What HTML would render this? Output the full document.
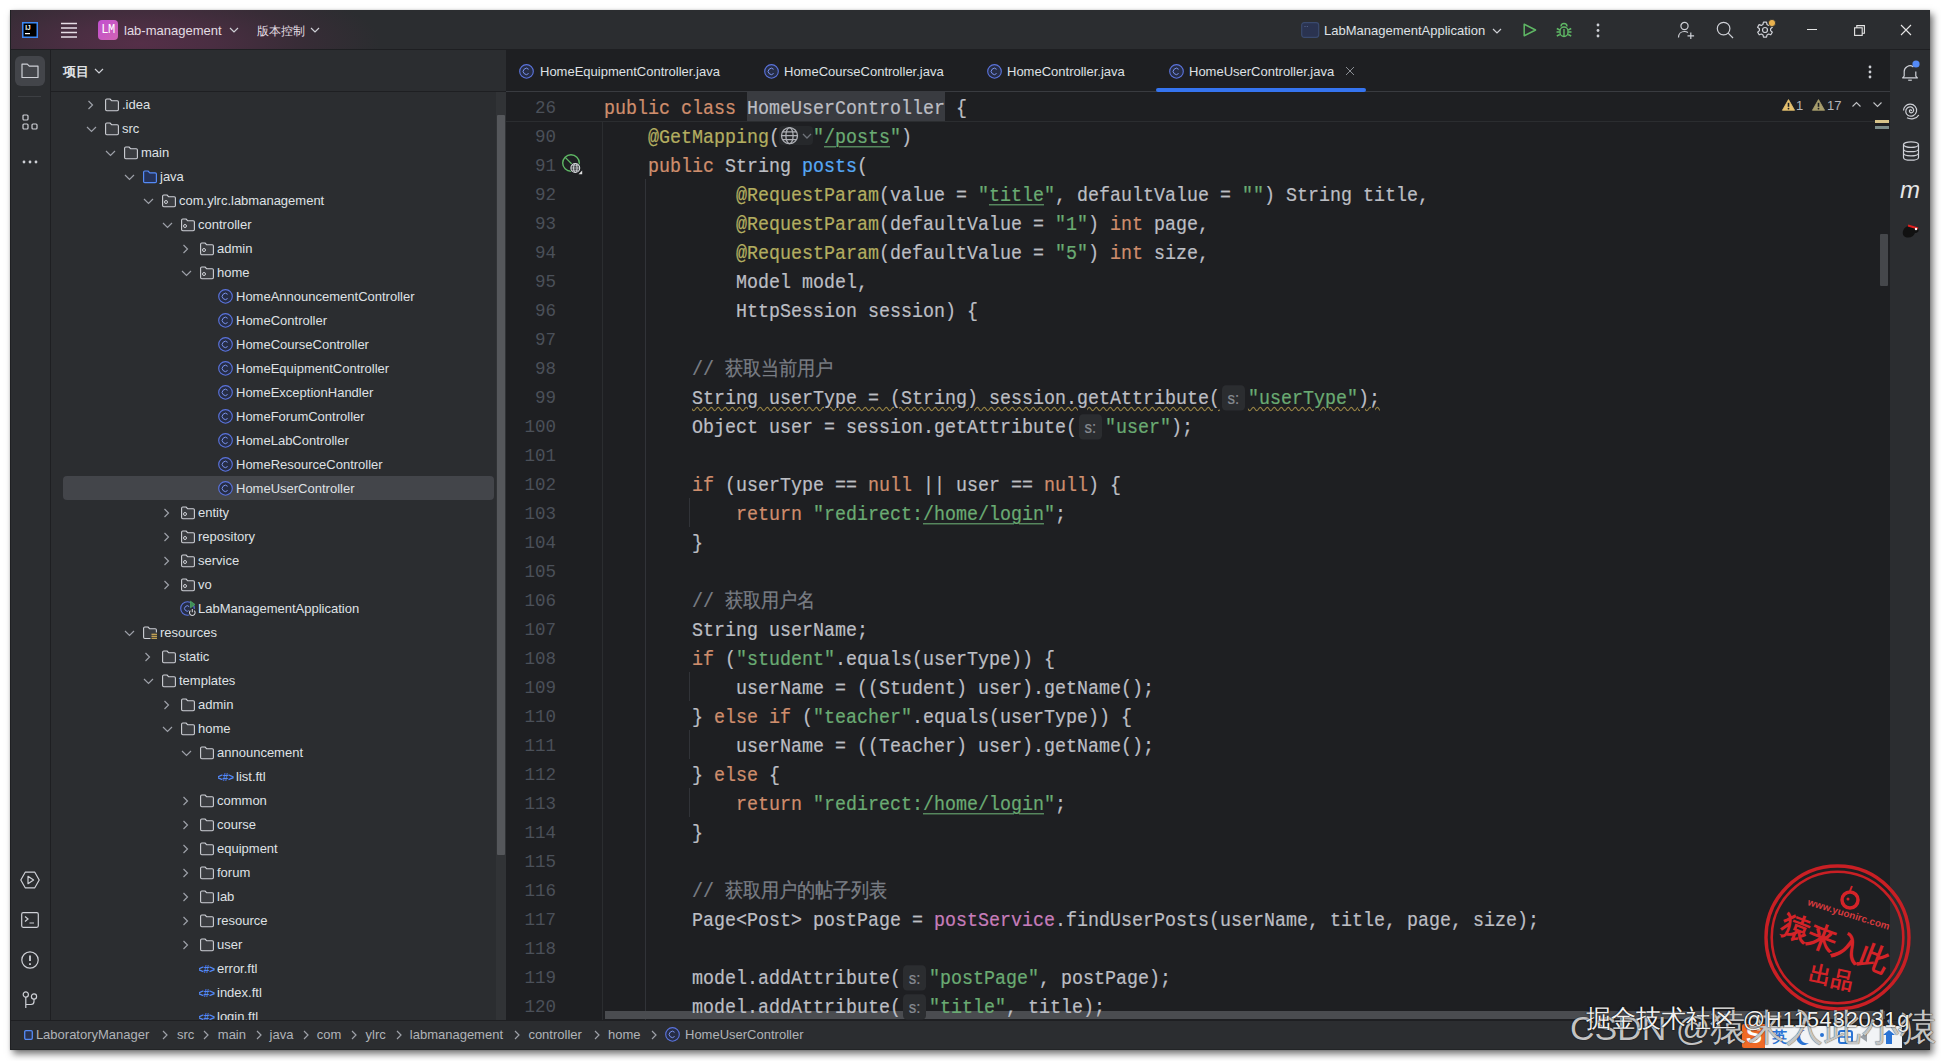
<!DOCTYPE html>
<html><head><meta charset="utf-8">
<style>
*{margin:0;padding:0;box-sizing:border-box}
html,body{width:1941px;height:1061px;overflow:hidden;background:#fff;font-family:"Liberation Sans",sans-serif}
.a{position:absolute}
svg{overflow:visible}
#win{position:absolute;left:10px;top:10px;width:1920px;height:1040px;background:#2b2d30;overflow:hidden;box-shadow:3px 4px 7px rgba(0,0,0,.55),0 0 2px rgba(0,0,0,.15);border-bottom:1px solid #222426}
#title{position:absolute;left:0;top:0;width:1920px;height:40px;background:radial-gradient(ellipse 240px 70px at 130px 34px,#552f48 0%,#4a2e42 30%,#372c36 68%,#2b2d30 100%);border-bottom:1px solid #1e1f22}
#ltool{position:absolute;left:0;top:40px;width:41px;height:970px;background:#2b2d30;border-right:1px solid #1e1f22}
#proj{position:absolute;left:41px;top:40px;width:455px;height:970px;background:#2b2d30;overflow:hidden}
#editor{position:absolute;left:496px;top:40px;width:1384px;height:970px;background:#1e1f22;overflow:hidden}
#rtool{position:absolute;left:1880px;top:40px;width:40px;height:970px;background:#2b2d30}
#status{position:absolute;left:0;top:1010px;width:1920px;height:30px;background:#2b2d30;border-top:1px solid #1e1f22}
.tt,.t{position:absolute;white-space:pre;font-size:13px;color:#dfe1e5;line-height:24px;top:0}
.row{position:absolute;left:0;width:455px;height:24px}
.ar{position:absolute;top:0;fill:none;stroke:#9da0a8;stroke-width:1.2}
.ic{position:absolute;top:0}
.code{position:absolute;left:98px;white-space:pre;-webkit-text-stroke:.2px currentColor;transform:scaleY(1.1);transform-origin:0 19.5px;font-family:"Liberation Mono",monospace;font-size:18.33px;line-height:29px;height:29px;color:#bcbec4}
.ln{position:absolute;left:0;width:50px;text-align:right;font-family:"Liberation Mono",monospace;font-size:17.5px;line-height:29px;height:29px;color:#4b5059}
.k{color:#cf8e6d}.s{color:#6aab73}.an{color:#b3ae60}.m{color:#56a8f5}.c{color:#7a7e85}.f{color:#c77dbb}
.hl{background:#393b40;display:inline-block;height:29px;vertical-align:top}
.u{text-decoration:underline;text-underline-offset:3px;text-decoration-thickness:1px}
.hint{display:inline-block;position:relative;top:2px;width:23px;height:23px;margin:0 3px 0 2px;vertical-align:top;background:#2b2d30;border-radius:4px;color:#868a91;font-family:"Liberation Sans",sans-serif;font-size:15px;line-height:23px;text-align:center}
.globe{display:inline-block;width:33px;height:1px}
.wavy{text-decoration:underline wavy #9a8544;text-decoration-thickness:1px;text-underline-offset:2px}
.tab{position:absolute;top:1px;height:41px;line-height:41px;font-size:13px;color:#dfe1e5;white-space:pre}
.ti{position:absolute;fill:none;stroke:#ced0d6;stroke-width:1.2}
</style></head><body>

<svg width="0" height="0" style="position:absolute">
<defs>
<symbol id="i-folder" viewBox="0 0 16 24"><path d="M1.6 7.2a1.2 1.2 0 0 1 1.2-1.2h3.2l1.8 1.8h5.4a1.2 1.2 0 0 1 1.2 1.2v7.5a1.2 1.2 0 0 1-1.2 1.2H2.8a1.2 1.2 0 0 1-1.2-1.2z" fill="#3a3c40" stroke="#ced0d6" stroke-width="1.1" stroke-linejoin="round"/></symbol>
<symbol id="i-pkg" viewBox="0 0 16 24"><path d="M1.6 7.2a1.2 1.2 0 0 1 1.2-1.2h3.2l1.8 1.8h5.4a1.2 1.2 0 0 1 1.2 1.2v7.5a1.2 1.2 0 0 1-1.2 1.2H2.8a1.2 1.2 0 0 1-1.2-1.2z" fill="#3a3c40" stroke="#ced0d6" stroke-width="1.1" stroke-linejoin="round"/><circle cx="5" cy="13" r="1.5" fill="none" stroke="#ced0d6" stroke-width="1"/></symbol>
<symbol id="i-jfolder" viewBox="0 0 16 24"><path d="M1.6 7.2a1.2 1.2 0 0 1 1.2-1.2h3.2l1.8 1.8h5.4a1.2 1.2 0 0 1 1.2 1.2v7.5a1.2 1.2 0 0 1-1.2 1.2H2.8a1.2 1.2 0 0 1-1.2-1.2z" fill="#25335a" stroke="#548af7" stroke-width="1.2" stroke-linejoin="round"/></symbol>
<symbol id="i-res" viewBox="0 0 16 24"><path d="M8.5 17.5H2.8a1.2 1.2 0 0 1-1.2-1.2V7.2a1.2 1.2 0 0 1 1.2-1.2h3.2l1.8 1.8h5.4a1.2 1.2 0 0 1 1.2 1.2v2.5" fill="#3a3c40" stroke="#ced0d6" stroke-width="1.1" stroke-linejoin="round"/><path d="M9.5 13.3h5.5M9.5 15.3h5.5M9.5 17.3h5.5" stroke="#f2c55c" stroke-width="1.1"/></symbol>
<symbol id="i-class" viewBox="0 0 16 24"><circle cx="7.5" cy="11.4" r="6.8" fill="#262d45" stroke="#5b74de" stroke-width="1.1"/><path d="M9.6 9.3A3.1 3.1 0 1 0 9.6 13.5" fill="none" stroke="#7b93ee" stroke-width="1"/></symbol>
<symbol id="i-app" viewBox="0 0 16 24"><circle cx="7.5" cy="11.5" r="6.8" fill="#262d45" stroke="#5b74de" stroke-width="1.1"/><path d="M9.2 9.6A2.7 2.7 0 1 0 9.2 13.4" fill="none" stroke="#7b93ee" stroke-width="1"/><path d="M10.5 4.2l4.5 3.3-4.5 3.3z" fill="#3d8f58" stroke="#4fa55f" stroke-width=".8"/><circle cx="12.3" cy="15.6" r="4" fill="#2b2d30"/><path d="M10.4 13.6a2.8 2.8 0 1 0 3.8 0M12.3 12v3.2" fill="none" stroke="#ced0d6" stroke-width="1.1"/></symbol>
<symbol id="i-ftl" viewBox="0 0 16 24"><text x="7.5" y="15.6" text-anchor="middle" font-family="Liberation Sans" font-size="10" font-weight="bold" fill="#548af7">&lt;#&gt;</text></symbol>
</defs></svg>

<div id="win">
  <div id="title">
<svg class="a" style="left:12px;top:12px" width="16" height="16"><rect x=".75" y=".75" width="14.5" height="14.5" fill="#000" stroke="#3d8af7" stroke-width="1.5"/><text x="3.2" y="8.2" font-family="Liberation Sans" font-weight="bold" font-size="6.5" fill="#fff">IJ</text><rect x="3" y="11" width="5" height="1.2" fill="#fff"/></svg>
<svg class="a" style="left:51px;top:12px" width="16" height="16"><path d="M0 1.5h16M0 6h16M0 10.5h16M0 15h16" stroke="#e6dde6" stroke-width="1.3"/></svg>
<div class="a" style="left:88px;top:10px;width:20px;height:20px;border-radius:4px;background:linear-gradient(135deg,#c24fd0,#d063b4)"></div>
<span class="a" style="left:89px;top:10px;width:18px;text-align:center;font-family:'Liberation Mono',monospace;font-size:12px;line-height:20px;color:#fff;letter-spacing:-.5px">LM</span>
<span class="a" style="left:114px;top:11px;font-size:13px;line-height:20px;color:#e3dde3">lab-management</span>
<svg class="a ti" style="left:219px;top:17px" width="10" height="6"><path d="M1 1l4 4 4-4"/></svg>
<span class="a" style="left:247px;top:11px;font-size:12px;line-height:20px;color:#e3dde3">版本控制</span>
<svg class="a ti" style="left:300px;top:17px" width="10" height="6"><path d="M1 1l4 4 4-4"/></svg>
<svg class="a" style="left:1291px;top:12px" width="19" height="16"><rect x=".7" y=".7" width="17" height="14.6" rx="2.5" fill="#2a3350" stroke="#3a4a6e" stroke-width="1.2"/><path d="M3.5 4.5h1M5.8 4.5h1" stroke="#5a6a90" stroke-width="1"/></svg>
<span class="a" style="left:1314px;top:11px;font-size:13px;line-height:20px;color:#dfe1e5">LabManagementApplication</span>
<svg class="a ti" style="left:1482px;top:18px" width="10" height="6"><path d="M1 1l4 4 4-4"/></svg>
<svg class="a" style="left:1513px;top:13px" width="14" height="14"><path d="M1.2 1.2v11.6L12.6 7z" fill="none" stroke="#5fb865" stroke-width="1.5" stroke-linejoin="round"/></svg>
<svg class="a" style="left:1546px;top:12px" width="16" height="16" fill="none" stroke="#5fb865" stroke-width="1.4"><path d="M5 4.5a3 3 0 0 1 6 0"/><rect x="4" y="5" width="8" height="9.5" rx="4"/><path d="M8 7v7M0.8 6.5l3 1.5M15.2 6.5l-3 1.5M0.5 10h3.3M15.5 10h-3.3M0.8 14l3-1.5M15.2 14l-3-1.5"/></svg>
<svg class="a" style="left:1586px;top:13px" width="4" height="14"><circle cx="2" cy="2" r="1.4" fill="#ced0d6"/><circle cx="2" cy="7.5" r="1.4" fill="#ced0d6"/><circle cx="2" cy="13" r="1.4" fill="#ced0d6"/></svg>
<svg class="a ti" style="left:1667px;top:11px" width="18" height="18"><circle cx="7.5" cy="5" r="3.6"/><path d="M1.5 16.5c0-3.5 2.5-6 6-6 1.5 0 2.6.4 3.4 1"/><path d="M13.8 11.5v6.5M10.5 14.8h6.6"/></svg>
<svg class="a ti" style="left:1706px;top:11px" width="18" height="18"><circle cx="7.6" cy="7.6" r="6.3"/><path d="M12.2 12.2l4.8 4.8"/></svg>
<svg class="a ti" style="left:1746px;top:11px" width="18" height="18"><path d="M7.5 1.2h3l.5 2.3 1.6.9 2.2-.8 1.5 2.6-1.7 1.6v1.8l1.7 1.6-1.5 2.6-2.2-.8-1.6.9-.5 2.3h-3l-.5-2.3-1.6-.9-2.2.8-1.5-2.6 1.7-1.6v-1.8L1.6 6.2l1.5-2.6 2.2.8 1.6-.9z" stroke-linejoin="round"/><circle cx="9" cy="9" r="2.5"/></svg>
<svg class="a" style="left:1758px;top:9px" width="8" height="8"><circle cx="4" cy="4" r="3.6" fill="#e9b14e" stroke="#2b2d30" stroke-width=".8"/></svg>
<div class="a" style="left:1797px;top:19px;width:10px;height:1.2px;background:#e6e6e6"></div>
<svg class="a" style="left:1844px;top:15px" width="11" height="11" fill="none" stroke="#e6e6e6" stroke-width="1.1"><rect x=".6" y="2.8" width="7.6" height="7.6"/><path d="M2.8 2.8V.6h7.6v7.6H8.2"/></svg>
<svg class="a" style="left:1891px;top:15px" width="10" height="10"><path d="M0 0l10 10M10 0L0 10" stroke="#e6e6e6" stroke-width="1.1"/></svg>

  </div>
  <div id="ltool">
<div class="a" style="left:5px;top:6px;width:30px;height:30px;border-radius:6px;background:#43454a"></div>
<svg class="a ti" style="left:11px;top:13px" width="18" height="16"><path d="M1 1.2h5.3l2 2H17v11.3H1z" stroke-linejoin="round"/></svg>
<div class="a" style="left:8px;top:46px;width:23px;height:1px;background:#3d3f43"></div>
<svg class="a ti" style="left:12px;top:64px" width="16" height="16"><rect x="1" y="1" width="5" height="5" rx="1"/><rect x="1" y="10" width="5" height="5" rx="1"/><rect x="10" y="10" width="5" height="5" rx="1"/></svg>
<svg class="a" style="left:12px;top:110px" width="16" height="4"><circle cx="2" cy="2" r="1.4" fill="#ced0d6"/><circle cx="8" cy="2" r="1.4" fill="#ced0d6"/><circle cx="14" cy="2" r="1.4" fill="#ced0d6"/></svg>
<svg class="a ti" style="left:10px;top:821px" width="20" height="18"><path d="M5.2 1.2h9.6l4.4 7.8-4.4 7.8H5.2L.8 9z" stroke-linejoin="round"/><path d="M8 5.3v7.4l5.6-3.7z" stroke-linejoin="round"/></svg>
<svg class="a ti" style="left:11px;top:862px" width="18" height="16"><rect x=".7" y=".7" width="16.6" height="14.6" rx="1.5"/><path d="M4 4.5l3 2.5-3 2.5M8.5 11h4.5"/></svg>
<svg class="a ti" style="left:11px;top:901px" width="18" height="18"><circle cx="9" cy="9" r="8.2"/><path d="M9 4.5v5.5M9 12.3v1.6" stroke-width="1.8"/></svg>
<svg class="a ti" style="left:12px;top:941px" width="16" height="18"><circle cx="3.8" cy="3.5" r="2.6"/><circle cx="12" cy="5.5" r="2.6"/><path d="M3.8 6.1v11M3.8 13.5h5.2c2 0 3-1 3-3V8.1"/></svg>

  </div>
  <div id="proj">
    <span class="a" style="left:12px;top:12px;font-size:13px;font-weight:bold;color:#dfe1e5;line-height:20px">项目</span>
    <svg class="a ti" style="left:43px;top:18px" width="10" height="6"><path d="M1 1l4 4 4-4"/></svg>
    <div class="a" style="left:0;top:41px;width:455px;height:1px;background:#1e1f22"></div>
    <div class="a" style="left:445px;top:42px;width:10px;height:930px;background:#313336"></div>
    <div class="a" style="left:446px;top:65px;width:8px;height:740px;background:#55575b;border-radius:1px"></div>
    <div class="a" style="left:12px;top:426px;width:431px;height:24px;background:#43454a;border-radius:4px"></div>
<div class="row" style="top:43px"><svg class="ar" style="left:35px" width="10" height="24"><path d="M2.5 8l4 4-4 4"/></svg><svg class="ic" style="left:53px" width="16" height="24"><use href="#i-folder"/></svg><span class="tt" style="left:71px">.idea</span></div>
<div class="row" style="top:67px"><svg class="ar" style="left:34px" width="12" height="24"><path d="M2 10l4.5 4.5 4.5-4.5"/></svg><svg class="ic" style="left:53px" width="16" height="24"><use href="#i-folder"/></svg><span class="tt" style="left:71px">src</span></div>
<div class="row" style="top:91px"><svg class="ar" style="left:53px" width="12" height="24"><path d="M2 10l4.5 4.5 4.5-4.5"/></svg><svg class="ic" style="left:72px" width="16" height="24"><use href="#i-folder"/></svg><span class="tt" style="left:90px">main</span></div>
<div class="row" style="top:115px"><svg class="ar" style="left:72px" width="12" height="24"><path d="M2 10l4.5 4.5 4.5-4.5"/></svg><svg class="ic" style="left:91px" width="16" height="24"><use href="#i-jfolder"/></svg><span class="tt" style="left:109px">java</span></div>
<div class="row" style="top:139px"><svg class="ar" style="left:91px" width="12" height="24"><path d="M2 10l4.5 4.5 4.5-4.5"/></svg><svg class="ic" style="left:110px" width="16" height="24"><use href="#i-pkg"/></svg><span class="tt" style="left:128px">com.ylrc.labmanagement</span></div>
<div class="row" style="top:163px"><svg class="ar" style="left:110px" width="12" height="24"><path d="M2 10l4.5 4.5 4.5-4.5"/></svg><svg class="ic" style="left:129px" width="16" height="24"><use href="#i-pkg"/></svg><span class="tt" style="left:147px">controller</span></div>
<div class="row" style="top:187px"><svg class="ar" style="left:130px" width="10" height="24"><path d="M2.5 8l4 4-4 4"/></svg><svg class="ic" style="left:148px" width="16" height="24"><use href="#i-pkg"/></svg><span class="tt" style="left:166px">admin</span></div>
<div class="row" style="top:211px"><svg class="ar" style="left:129px" width="12" height="24"><path d="M2 10l4.5 4.5 4.5-4.5"/></svg><svg class="ic" style="left:148px" width="16" height="24"><use href="#i-pkg"/></svg><span class="tt" style="left:166px">home</span></div>
<div class="row" style="top:235px"><svg class="ic" style="left:167px" width="16" height="24"><use href="#i-class"/></svg><span class="tt" style="left:185px">HomeAnnouncementController</span></div>
<div class="row" style="top:259px"><svg class="ic" style="left:167px" width="16" height="24"><use href="#i-class"/></svg><span class="tt" style="left:185px">HomeController</span></div>
<div class="row" style="top:283px"><svg class="ic" style="left:167px" width="16" height="24"><use href="#i-class"/></svg><span class="tt" style="left:185px">HomeCourseController</span></div>
<div class="row" style="top:307px"><svg class="ic" style="left:167px" width="16" height="24"><use href="#i-class"/></svg><span class="tt" style="left:185px">HomeEquipmentController</span></div>
<div class="row" style="top:331px"><svg class="ic" style="left:167px" width="16" height="24"><use href="#i-class"/></svg><span class="tt" style="left:185px">HomeExceptionHandler</span></div>
<div class="row" style="top:355px"><svg class="ic" style="left:167px" width="16" height="24"><use href="#i-class"/></svg><span class="tt" style="left:185px">HomeForumController</span></div>
<div class="row" style="top:379px"><svg class="ic" style="left:167px" width="16" height="24"><use href="#i-class"/></svg><span class="tt" style="left:185px">HomeLabController</span></div>
<div class="row" style="top:403px"><svg class="ic" style="left:167px" width="16" height="24"><use href="#i-class"/></svg><span class="tt" style="left:185px">HomeResourceController</span></div>
<div class="row" style="top:427px"><svg class="ic" style="left:167px" width="16" height="24"><use href="#i-class"/></svg><span class="tt" style="left:185px">HomeUserController</span></div>
<div class="row" style="top:451px"><svg class="ar" style="left:111px" width="10" height="24"><path d="M2.5 8l4 4-4 4"/></svg><svg class="ic" style="left:129px" width="16" height="24"><use href="#i-pkg"/></svg><span class="tt" style="left:147px">entity</span></div>
<div class="row" style="top:475px"><svg class="ar" style="left:111px" width="10" height="24"><path d="M2.5 8l4 4-4 4"/></svg><svg class="ic" style="left:129px" width="16" height="24"><use href="#i-pkg"/></svg><span class="tt" style="left:147px">repository</span></div>
<div class="row" style="top:499px"><svg class="ar" style="left:111px" width="10" height="24"><path d="M2.5 8l4 4-4 4"/></svg><svg class="ic" style="left:129px" width="16" height="24"><use href="#i-pkg"/></svg><span class="tt" style="left:147px">service</span></div>
<div class="row" style="top:523px"><svg class="ar" style="left:111px" width="10" height="24"><path d="M2.5 8l4 4-4 4"/></svg><svg class="ic" style="left:129px" width="16" height="24"><use href="#i-pkg"/></svg><span class="tt" style="left:147px">vo</span></div>
<div class="row" style="top:547px"><svg class="ic" style="left:129px" width="16" height="24"><use href="#i-app"/></svg><span class="tt" style="left:147px">LabManagementApplication</span></div>
<div class="row" style="top:571px"><svg class="ar" style="left:72px" width="12" height="24"><path d="M2 10l4.5 4.5 4.5-4.5"/></svg><svg class="ic" style="left:91px" width="16" height="24"><use href="#i-res"/></svg><span class="tt" style="left:109px">resources</span></div>
<div class="row" style="top:595px"><svg class="ar" style="left:92px" width="10" height="24"><path d="M2.5 8l4 4-4 4"/></svg><svg class="ic" style="left:110px" width="16" height="24"><use href="#i-folder"/></svg><span class="tt" style="left:128px">static</span></div>
<div class="row" style="top:619px"><svg class="ar" style="left:91px" width="12" height="24"><path d="M2 10l4.5 4.5 4.5-4.5"/></svg><svg class="ic" style="left:110px" width="16" height="24"><use href="#i-folder"/></svg><span class="tt" style="left:128px">templates</span></div>
<div class="row" style="top:643px"><svg class="ar" style="left:111px" width="10" height="24"><path d="M2.5 8l4 4-4 4"/></svg><svg class="ic" style="left:129px" width="16" height="24"><use href="#i-folder"/></svg><span class="tt" style="left:147px">admin</span></div>
<div class="row" style="top:667px"><svg class="ar" style="left:110px" width="12" height="24"><path d="M2 10l4.5 4.5 4.5-4.5"/></svg><svg class="ic" style="left:129px" width="16" height="24"><use href="#i-folder"/></svg><span class="tt" style="left:147px">home</span></div>
<div class="row" style="top:691px"><svg class="ar" style="left:129px" width="12" height="24"><path d="M2 10l4.5 4.5 4.5-4.5"/></svg><svg class="ic" style="left:148px" width="16" height="24"><use href="#i-folder"/></svg><span class="tt" style="left:166px">announcement</span></div>
<div class="row" style="top:715px"><svg class="ic" style="left:167px" width="16" height="24"><use href="#i-ftl"/></svg><span class="tt" style="left:185px">list.ftl</span></div>
<div class="row" style="top:739px"><svg class="ar" style="left:130px" width="10" height="24"><path d="M2.5 8l4 4-4 4"/></svg><svg class="ic" style="left:148px" width="16" height="24"><use href="#i-folder"/></svg><span class="tt" style="left:166px">common</span></div>
<div class="row" style="top:763px"><svg class="ar" style="left:130px" width="10" height="24"><path d="M2.5 8l4 4-4 4"/></svg><svg class="ic" style="left:148px" width="16" height="24"><use href="#i-folder"/></svg><span class="tt" style="left:166px">course</span></div>
<div class="row" style="top:787px"><svg class="ar" style="left:130px" width="10" height="24"><path d="M2.5 8l4 4-4 4"/></svg><svg class="ic" style="left:148px" width="16" height="24"><use href="#i-folder"/></svg><span class="tt" style="left:166px">equipment</span></div>
<div class="row" style="top:811px"><svg class="ar" style="left:130px" width="10" height="24"><path d="M2.5 8l4 4-4 4"/></svg><svg class="ic" style="left:148px" width="16" height="24"><use href="#i-folder"/></svg><span class="tt" style="left:166px">forum</span></div>
<div class="row" style="top:835px"><svg class="ar" style="left:130px" width="10" height="24"><path d="M2.5 8l4 4-4 4"/></svg><svg class="ic" style="left:148px" width="16" height="24"><use href="#i-folder"/></svg><span class="tt" style="left:166px">lab</span></div>
<div class="row" style="top:859px"><svg class="ar" style="left:130px" width="10" height="24"><path d="M2.5 8l4 4-4 4"/></svg><svg class="ic" style="left:148px" width="16" height="24"><use href="#i-folder"/></svg><span class="tt" style="left:166px">resource</span></div>
<div class="row" style="top:883px"><svg class="ar" style="left:130px" width="10" height="24"><path d="M2.5 8l4 4-4 4"/></svg><svg class="ic" style="left:148px" width="16" height="24"><use href="#i-folder"/></svg><span class="tt" style="left:166px">user</span></div>
<div class="row" style="top:907px"><svg class="ic" style="left:148px" width="16" height="24"><use href="#i-ftl"/></svg><span class="tt" style="left:166px">error.ftl</span></div>
<div class="row" style="top:931px"><svg class="ic" style="left:148px" width="16" height="24"><use href="#i-ftl"/></svg><span class="tt" style="left:166px">index.ftl</span></div>
<div class="row" style="top:955px"><svg class="ic" style="left:148px" width="16" height="24"><use href="#i-ftl"/></svg><span class="tt" style="left:166px">login.ftl</span></div>
  </div>
  <div id="editor">
<svg class="ic" style="left:13px;top:10px" width="16" height="24"><use href="#i-class"/></svg>
<span class="tab" style="left:34px">HomeEquipmentController.java</span>
<svg class="ic" style="left:258px;top:10px" width="16" height="24"><use href="#i-class"/></svg>
<span class="tab" style="left:278px">HomeCourseController.java</span>
<svg class="ic" style="left:481px;top:10px" width="16" height="24"><use href="#i-class"/></svg>
<span class="tab" style="left:501px">HomeController.java</span>
<svg class="ic" style="left:663px;top:10px" width="16" height="24"><use href="#i-class"/></svg>
<span class="tab" style="left:683px">HomeUserController.java</span>
<svg class="a" style="left:840px;top:17px" width="8" height="8"><path d="M0 0l8 8M8 0L0 8" stroke="#8a8d93" stroke-width="1"/></svg>
<div class="a" style="left:650px;top:38px;width:210px;height:4px;border-radius:2px;background:#3574f0;z-index:2"></div>
<svg class="a" style="left:1362px;top:15px" width="4" height="14"><circle cx="2" cy="2" r="1.4" fill="#ced0d6"/><circle cx="2" cy="7" r="1.4" fill="#ced0d6"/><circle cx="2" cy="12" r="1.4" fill="#ced0d6"/></svg>

    <div class="a" style="left:0;top:41px;width:1384px;height:1px;background:#393b40"></div>
    <div class="a" style="left:0;top:71px;width:1384px;height:1px;background:#2b2d30"></div>
    <div class="a" style="left:96px;top:72px;width:1px;height:900px;background:#2b2d30"></div>
<div class="a" style="left:241px;top:42px;width:198px;height:29px;background:#393b40"></div>
<div class="a" style="left:139px;top:129px;width:1px;height:850px;background:#313338"></div>
<div class="a" style="left:183px;top:448px;width:1px;height:29px;background:#313338"></div>
<div class="a" style="left:183px;top:622px;width:1px;height:29px;background:#313338"></div>
<div class="a" style="left:183px;top:680px;width:1px;height:29px;background:#313338"></div>
<div class="a" style="left:183px;top:738px;width:1px;height:29px;background:#313338"></div>
<div class="a" style="left:99px;top:961px;width:1280px;height:8px;background:#4a4c50"></div>
<div class="ln" style="top:44px">26</div><div class="code" style="top:45px"><span class="k">public</span> <span class="k">class</span> HomeUserController {</div>
<div class="ln" style="top:73px">90</div><div class="code" style="top:74px">    <span class="an">@GetMapping</span>(<span class="globe"></span><span class="s">"<span class="u">/posts</span>"</span>)</div>
<div class="ln" style="top:102px">91</div><div class="code" style="top:103px">    <span class="k">public</span> String <span class="m">posts</span>(</div>
<div class="ln" style="top:131px">92</div><div class="code" style="top:132px">            <span class="an">@RequestParam</span>(value = <span class="s">"<span class="u">title</span>"</span>, defaultValue = <span class="s">""</span>) String title,</div>
<div class="ln" style="top:160px">93</div><div class="code" style="top:161px">            <span class="an">@RequestParam</span>(defaultValue = <span class="s">"1"</span>) <span class="k">int</span> page,</div>
<div class="ln" style="top:189px">94</div><div class="code" style="top:190px">            <span class="an">@RequestParam</span>(defaultValue = <span class="s">"5"</span>) <span class="k">int</span> size,</div>
<div class="ln" style="top:218px">95</div><div class="code" style="top:219px">            Model model,</div>
<div class="ln" style="top:247px">96</div><div class="code" style="top:248px">            HttpSession session) {</div>
<div class="ln" style="top:276px">97</div><div class="code" style="top:277px"></div>
<div class="ln" style="top:305px">98</div><div class="code" style="top:306px">        <span class="c">// 获取当前用户</span></div>
<div class="ln" style="top:334px">99</div><div class="code" style="top:335px">        <span class="wavy">String userType = (String) session.getAttribute(</span><span class="hint">s:</span><span class="wavy"><span class="s">"userType"</span>);</span></div>
<div class="ln" style="top:363px">100</div><div class="code" style="top:364px">        Object user = session.getAttribute(<span class="hint">s:</span><span class="s">"user"</span>);</div>
<div class="ln" style="top:392px">101</div><div class="code" style="top:393px"></div>
<div class="ln" style="top:421px">102</div><div class="code" style="top:422px">        <span class="k">if</span> (userType == <span class="k">null</span> || user == <span class="k">null</span>) {</div>
<div class="ln" style="top:450px">103</div><div class="code" style="top:451px">            <span class="k">return</span> <span class="s">"redirect:<span class="u">/home/login</span>"</span>;</div>
<div class="ln" style="top:479px">104</div><div class="code" style="top:480px">        }</div>
<div class="ln" style="top:508px">105</div><div class="code" style="top:509px"></div>
<div class="ln" style="top:537px">106</div><div class="code" style="top:538px">        <span class="c">// 获取用户名</span></div>
<div class="ln" style="top:566px">107</div><div class="code" style="top:567px">        String userName;</div>
<div class="ln" style="top:595px">108</div><div class="code" style="top:596px">        <span class="k">if</span> (<span class="s">"student"</span>.equals(userType)) {</div>
<div class="ln" style="top:624px">109</div><div class="code" style="top:625px">            userName = ((Student) user).getName();</div>
<div class="ln" style="top:653px">110</div><div class="code" style="top:654px">        } <span class="k">else</span> <span class="k">if</span> (<span class="s">"teacher"</span>.equals(userType)) {</div>
<div class="ln" style="top:682px">111</div><div class="code" style="top:683px">            userName = ((Teacher) user).getName();</div>
<div class="ln" style="top:711px">112</div><div class="code" style="top:712px">        } <span class="k">else</span> {</div>
<div class="ln" style="top:740px">113</div><div class="code" style="top:741px">            <span class="k">return</span> <span class="s">"redirect:<span class="u">/home/login</span>"</span>;</div>
<div class="ln" style="top:769px">114</div><div class="code" style="top:770px">        }</div>
<div class="ln" style="top:798px">115</div><div class="code" style="top:799px"></div>
<div class="ln" style="top:827px">116</div><div class="code" style="top:828px">        <span class="c">// 获取用户的帖子列表</span></div>
<div class="ln" style="top:856px">117</div><div class="code" style="top:857px">        Page&lt;Post&gt; postPage = <span class="f">postService</span>.findUserPosts(userName, title, page, size);</div>
<div class="ln" style="top:885px">118</div><div class="code" style="top:886px"></div>
<div class="ln" style="top:914px">119</div><div class="code" style="top:915px">        model.addAttribute(<span class="hint">s:</span><span class="s">"postPage"</span>, postPage);</div>
<div class="ln" style="top:943px">120</div><div class="code" style="top:944px">        model.addAttribute(<span class="hint">s:</span><span class="s">"title"</span>, title);</div>
<!-- globe inlay line 90 -->
<div class="a" style="left:273px;top:76px;width:34px;height:19px;border-radius:4px;background:#26282b"></div>
<svg class="a" style="left:274px;top:77px" width="20" height="18" fill="none" stroke="#aeb0b6" stroke-width="1.3"><circle cx="9.5" cy="8.7" r="8"/><ellipse cx="9.5" cy="8.7" rx="3.6" ry="8"/><path d="M1.5 8.7h16M2.6 4.8h13.8M2.6 12.6h13.8"/></svg>
<svg class="a" style="left:296px;top:83px" width="10" height="6"><path d="M1 1l4 4 4-4" fill="none" stroke="#6f737a" stroke-width="1.3"/></svg>
<!-- gutter bean icon line 91 -->
<svg class="a" style="left:55px;top:103px" width="22" height="22" fill="none"><circle cx="10" cy="10" r="8.3" stroke="#5fb865" stroke-width="1.4"/><path d="M4.2 4.4L16 16.2" stroke="#5fb865" stroke-width="1.3"/><circle cx="14.3" cy="15" r="5.6" fill="#1e1f22"/><circle cx="14.3" cy="15" r="4.4" fill="#1e1f22" stroke="#d6d8dc" stroke-width="1.1"/><ellipse cx="14.3" cy="15" rx="1.8" ry="4.4" stroke="#d6d8dc" stroke-width=".9"/><path d="M10 15h8.6M10.8 12.8h7M10.8 17.2h7" stroke="#d6d8dc" stroke-width=".8"/><path d="M17.5 21.2l3.7-3.7v3.7z" fill="#e0e0e0"/></svg>
<!-- warnings -->
<svg class="a" style="left:1276px;top:49px" width="13" height="12"><path d="M6.5.6L12.6 11.3H.4z" fill="#e5c06e" stroke="#e5c06e" stroke-width=".8" stroke-linejoin="round"/><path d="M6.5 3.8v4" stroke="#1e1f22" stroke-width="1.6"/><circle cx="6.5" cy="9.6" r=".9" fill="#1e1f22"/></svg>
<span class="a" style="left:1290px;top:48px;font-size:13px;line-height:16px;color:#b4b6bb">1</span>
<svg class="a" style="left:1306px;top:49px" width="13" height="12"><path d="M6.5.6L12.6 11.3H.4z" fill="#a79d6c" stroke="#a79d6c" stroke-width=".8" stroke-linejoin="round"/><path d="M6.5 3.8v4" stroke="#1e1f22" stroke-width="1.6"/><circle cx="6.5" cy="9.6" r=".9" fill="#1e1f22"/></svg>
<span class="a" style="left:1321px;top:48px;font-size:13px;line-height:16px;color:#b4b6bb">17</span>
<svg class="a" style="left:1346px;top:52px" width="9" height="5"><path d="M.5 4.5l4-4 4 4" fill="none" stroke="#c0c2c6" stroke-width="1.1"/></svg>
<svg class="a" style="left:1367px;top:52px" width="9" height="5"><path d="M.5.5l4 4 4-4" fill="none" stroke="#c0c2c6" stroke-width="1.1"/></svg>
<div class="a" style="left:1369px;top:70px;width:14px;height:3px;background:#d8c48a"></div>
<div class="a" style="left:1369px;top:76px;width:14px;height:3px;background:#7c8c8a"></div>
<!-- scrollbars -->
<div class="a" style="left:1374px;top:184px;width:8px;height:52px;border-radius:1px;background:#45474b"></div>

  </div>
  <div id="rtool">
<svg class="a ti" style="left:11px;top:13px" width="18" height="18" stroke-width="1.3"><path d="M3.2 13.2V8.6a5.8 5.8 0 0 1 9.2-4.7M14.8 8.6v4.6l1.6 1.6H1.6l1.6-1.6" stroke-linejoin="round"/><path d="M7.2 17.2h3.6"/></svg>
<svg class="a" style="left:22px;top:10px" width="8" height="8"><circle cx="4" cy="4" r="3.6" fill="#548af7"/></svg>
<svg class="a ti" style="left:12px;top:52px" width="18" height="18" stroke-width="1.4"><path d="M9.6 9.2c.2-1-.6-1.6-1.4-1.3-1.3.5-1 2.7.7 2.9 2 .2 3.2-1.8 2.6-3.6-.8-2.5-4-3-6-1.4-2.6 2-2.2 6.2.7 7.7 3.3 1.7 7.5-.2 8.3-3.8.9-4-2.4-7.8-6.6-7.6C4.400 2.300 1.600 5 1.500 8.600"/><path d="M5 15.8c3.400 1.900 9.500 1.400 11.800-2.800"/></svg>
<svg class="a ti" style="left:12px;top:91px" width="18" height="20"><ellipse cx="9" cy="3.6" rx="7.5" ry="2.8"/><path d="M1.5 3.6v12.8c0 1.6 3.4 2.8 7.5 2.8s7.5-1.2 7.5-2.8V3.6M1.5 7.9c0 1.6 3.4 2.8 7.5 2.8s7.5-1.2 7.5-2.8M1.5 12.1c0 1.6 3.4 2.8 7.5 2.8s7.5-1.2 7.5-2.8"/></svg>
<span class="a" style="left:10px;top:128px;font-family:'Liberation Sans';font-style:italic;font-size:24px;line-height:24px;color:#e6e6e6">m</span>
<svg class="a" style="left:11px;top:171px" width="20" height="18"><path d="M2 10c1-4 5-6 9-5l4 1.5c2 .5 3 2 2.5 3.5-.5 1.5-2 2-3.5 2-1 3-4 5-8 4.5C3 16 1 13.5 2 10z" fill="#111"/><path d="M7 4.5l10 3" stroke="#e02020" stroke-width="2"/><circle cx="15" cy="8" r="1.2" fill="#fff"/></svg>

  </div>
  <div id="status">
<svg class="a" style="left:14px;top:9px" width="10" height="10"><rect x=".7" y=".7" width="7.6" height="8.6" rx="1.2" fill="#2a3350" stroke="#548af7" stroke-width="1.3"/></svg>
<span class="a" style="left:25.9px;top:4px;font-size:13px;line-height:20px;color:#b0b3b8;white-space:pre">LaboratoryManager</span>
<span class="a" style="left:167.0px;top:4px;font-size:13px;line-height:20px;color:#b0b3b8;white-space:pre">src</span>
<span class="a" style="left:207.8px;top:4px;font-size:13px;line-height:20px;color:#b0b3b8;white-space:pre">main</span>
<span class="a" style="left:259.6px;top:4px;font-size:13px;line-height:20px;color:#b0b3b8;white-space:pre">java</span>
<span class="a" style="left:306.8px;top:4px;font-size:13px;line-height:20px;color:#b0b3b8;white-space:pre">com</span>
<span class="a" style="left:355.6px;top:4px;font-size:13px;line-height:20px;color:#b0b3b8;white-space:pre">ylrc</span>
<span class="a" style="left:399.8px;top:4px;font-size:13px;line-height:20px;color:#b0b3b8;white-space:pre">labmanagement</span>
<span class="a" style="left:518.4px;top:4px;font-size:13px;line-height:20px;color:#b0b3b8;white-space:pre">controller</span>
<span class="a" style="left:598.0px;top:4px;font-size:13px;line-height:20px;color:#b0b3b8;white-space:pre">home</span>
<span class="a" style="left:675.0px;top:4px;font-size:13px;line-height:20px;color:#b0b3b8;white-space:pre">HomeUserController</span>
<svg class="a" style="left:152.0px;top:9px" width="6" height="10"><path d="M1 1l4 4-4 4" fill="none" stroke="#9da0a8" stroke-width="1.2"/></svg>
<svg class="a" style="left:193.0px;top:9px" width="6" height="10"><path d="M1 1l4 4-4 4" fill="none" stroke="#9da0a8" stroke-width="1.2"/></svg>
<svg class="a" style="left:246.0px;top:9px" width="6" height="10"><path d="M1 1l4 4-4 4" fill="none" stroke="#9da0a8" stroke-width="1.2"/></svg>
<svg class="a" style="left:293.0px;top:9px" width="6" height="10"><path d="M1 1l4 4-4 4" fill="none" stroke="#9da0a8" stroke-width="1.2"/></svg>
<svg class="a" style="left:341.4px;top:9px" width="6" height="10"><path d="M1 1l4 4-4 4" fill="none" stroke="#9da0a8" stroke-width="1.2"/></svg>
<svg class="a" style="left:386.0px;top:9px" width="6" height="10"><path d="M1 1l4 4-4 4" fill="none" stroke="#9da0a8" stroke-width="1.2"/></svg>
<svg class="a" style="left:503.8px;top:9px" width="6" height="10"><path d="M1 1l4 4-4 4" fill="none" stroke="#9da0a8" stroke-width="1.2"/></svg>
<svg class="a" style="left:584.3px;top:9px" width="6" height="10"><path d="M1 1l4 4-4 4" fill="none" stroke="#9da0a8" stroke-width="1.2"/></svg>
<svg class="a" style="left:640.7px;top:9px" width="6" height="10"><path d="M1 1l4 4-4 4" fill="none" stroke="#9da0a8" stroke-width="1.2"/></svg>
<svg class="ic" style="left:655px;top:2px" width="16" height="24"><use href="#i-class"/></svg>
  </div>
<div id="winb" style="position:absolute;left:0;top:0;width:1920px;height:1040px;box-shadow:inset 1px 0 0 #1f2023;pointer-events:none"></div>
</div>
<svg class="a" style="left:1760px;top:860px" width="156" height="156" viewBox="0 0 156 156">
 <g fill="none" stroke="#c91f24">
  <circle cx="77.5" cy="77.5" r="71.5" stroke-width="3.4"/>
  <circle cx="77.5" cy="77.5" r="65.8" stroke-width="2.6"/>
 </g>
 <g transform="translate(90 40)"><circle cx="0" cy="0" r="8" fill="none" stroke="#d52328" stroke-width="3.5"/><path d="M0 -9l2 -5" stroke="#d52328" stroke-width="2"/><circle cx="-2" cy="-1" r="1.5" fill="#d52328"/></g>
 <text transform="translate(47 45) rotate(17)" font-family="Liberation Sans" font-weight="bold" font-size="10" fill="#d43a3e">www.yuonirc.com</text>
 <text transform="translate(19 72) rotate(21)" font-family="Liberation Serif" font-weight="bold" font-size="29" fill="#d42328" letter-spacing="-1">猿来入此</text>
 <text transform="translate(48 120) rotate(12)" font-family="Liberation Serif" font-weight="bold" font-size="22" fill="#d42328">出品</text>
</svg>
<div class="a" style="left:1742px;top:1024px;width:24px;height:24px;background:#ef6a26;border-radius:2px"></div>
<span class="a" style="left:1746px;top:1021px;font-family:'Liberation Sans';font-weight:bold;font-size:24px;line-height:28px;color:#fff">S</span>
<div class="a" style="left:1765px;top:1026px;width:137px;height:22px;background:#f2f4f6"></div>
<span class="a" style="left:1772px;top:1026px;font-size:15px;line-height:22px;color:#2a73d4;font-weight:bold">英</span>
<svg class="a" style="left:1792px;top:1029px" width="110" height="18"><path d="M13 1a7.5 7.5 0 1 0 4 13A6.5 6.5 0 0 1 13 1z" fill="#2a73d4"/><circle cx="30" cy="6" r="2" fill="#2a73d4"/><rect x="47" y="2" width="13" height="12" rx="2" fill="none" stroke="#2a73d4" stroke-width="2"/><path d="M47 8h13M53.5 2v12" stroke="#2a73d4" stroke-width="1.5"/><path d="M68 8l7-5v10z" fill="#9aa0a6"/><path d="M97 1l6 5h-3v9h-6V6h-3z" fill="#2a73d4"/></svg>
<span class="a" style="left:1570px;top:1007px;font-family:'Liberation Sans';font-size:34px;line-height:42px;color:rgba(215,215,215,.92);white-space:pre;text-shadow:0 0 1px rgba(0,0,0,.9)">CSDN @<span style="font-size:37px;letter-spacing:1px">猿来入此小猿</span></span>
<span class="a" style="left:1586px;top:1003px;font-family:'Liberation Sans';font-size:24.5px;line-height:32px;color:#f0f0f0;white-space:pre;text-shadow:0 0 1px #000,0 0 2px rgba(0,0,0,.8)">掘金技术社区 <span style="font-size:22px;letter-spacing:.7px">@H115432031g</span></span>

</body></html>
